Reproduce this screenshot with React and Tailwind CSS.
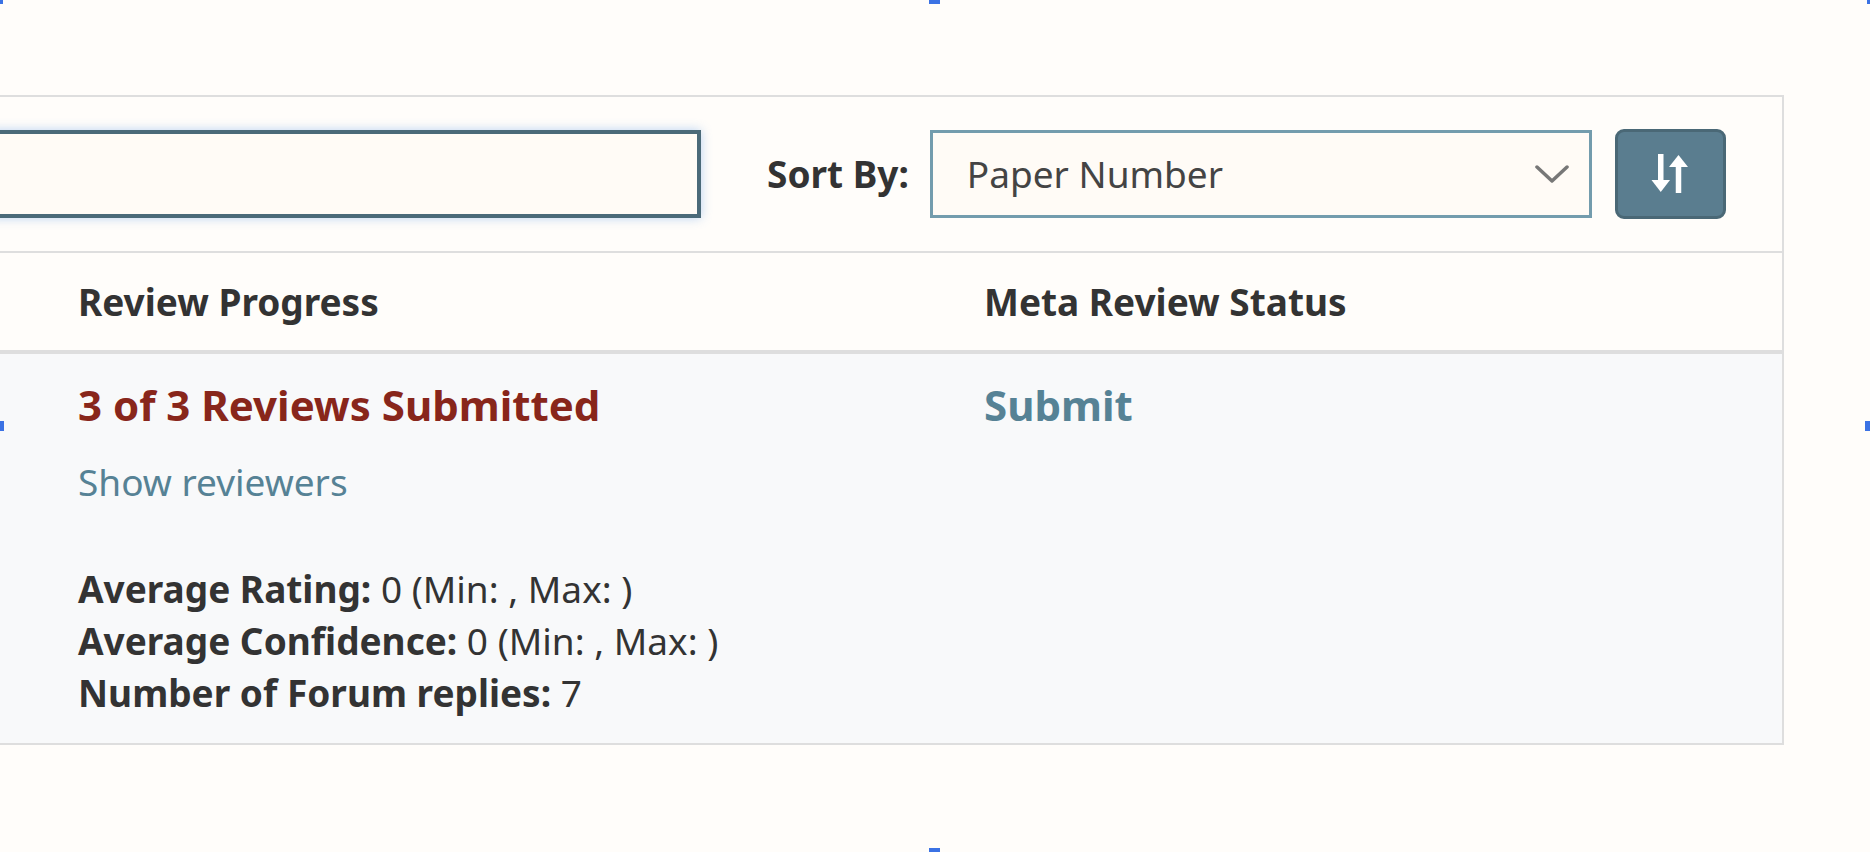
const SortIcon = () => (
  <svg width="38" height="44" viewBox="0 0 38 44" fill="#fff">
    {/* down arrow */}
    <rect x="7" y="2" width="5.5" height="30" />
    <polygon points="0.5,28 19,28 9.75,40" />
    {/* up arrow */}
    <polygon points="18,15 37,15 27.5,3" />
    <rect x="24.75" y="13" width="5.5" height="28" />
  </svg>
);

const Chevron = () => (
  <svg width="34" height="20" viewBox="0 0 34 20" fill="none">
    <polyline points="2,3 17,17 32,3" stroke="#777" strokeWidth="3.5" strokeLinecap="round" strokeLinejoin="round" />
  </svg>
);

const Handle = ({ className }) => (
  <div className={`absolute bg-[#3b72e4] ${className}`} />
);

export default function App() {
  return (
    <div
      className="relative w-[1870px] h-[852px] overflow-hidden bg-[#fffdfa] text-[#333]"
      style={{ fontFamily: '"Noto Sans", "Open Sans", sans-serif' }}
    >
      {/* selection handles */}
      <Handle className="left-0 top-0 w-[3px] h-[4px]" />
      <Handle className="left-[929px] top-0 w-[11px] h-[4px]" />
      <Handle className="right-0 top-0 w-[3px] h-[4px]" />
      <Handle className="left-0 top-[421px] w-[4px] h-[10px]" />
      <Handle className="right-0 top-[421px] w-[5px] h-[10px]" />
      <Handle className="left-[929px] bottom-0 w-[11px] h-[4px]" />

      <div className="pt-[95px]">
        <div className="w-[1784px] border-2 border-l-0 border-[#dedede]">
          {/* toolbar */}
          <div className="h-[156px] flex items-center border-b-2 border-[#dedede]">
            <input
              type="text"
              className="ml-[-10px] w-[711px] h-[88px] bg-[#fffbf6] border-[4px] border-[#4b6a79] shadow-[0_0_10px_rgba(102,160,233,0.45)] outline-none"
            />
            <span className="ml-[66px] text-[37px] font-bold">Sort By:</span>
            <div className="ml-[21px] w-[662px] h-[88px] border-[3px] border-[#739cad] bg-[#fffbf6] flex items-center justify-between pl-[34px] pr-[20px]">
              <span className="text-[37px] text-[#444]">Paper Number</span>
              <Chevron />
            </div>
            <button className="ml-[23px] w-[111px] h-[90px] rounded-[9px] bg-[#5a7d8f] border-[3px] border-[#4a6876] flex items-center justify-center">
              <SortIcon />
            </button>
          </div>

          {/* table header */}
          <div className="h-[101px] flex items-center border-b-4 border-[#dedede]">
            <div className="w-[984px] pl-[78px] text-[37px] font-bold">Review Progress</div>
            <div className="text-[37px] font-bold">Meta Review Status</div>
          </div>

          {/* row */}
          <div className="h-[389px] bg-[#f8f9fa] flex pt-[26px]">
            <div className="w-[984px] pl-[78px]">
              <div className="text-[42px] font-bold text-[#88261b] leading-[50px]">3 of 3 Reviews Submitted</div>
              <div className="mt-[27px] text-[37px] text-[#568295] leading-[50px]">Show reviewers</div>
              <div className="mt-[56px] text-[37px] leading-[52px]">
                <div><span className="font-bold">Average Rating:</span> 0 (Min: , Max: )</div>
                <div><span className="font-bold">Average Confidence:</span> 0 (Min: , Max: )</div>
                <div><span className="font-bold">Number of Forum replies:</span> 7</div>
              </div>
            </div>
            <div className="text-[42px] font-bold text-[#568295] leading-[50px]">Submit</div>
          </div>
        </div>
      </div>
    </div>
  );
}
